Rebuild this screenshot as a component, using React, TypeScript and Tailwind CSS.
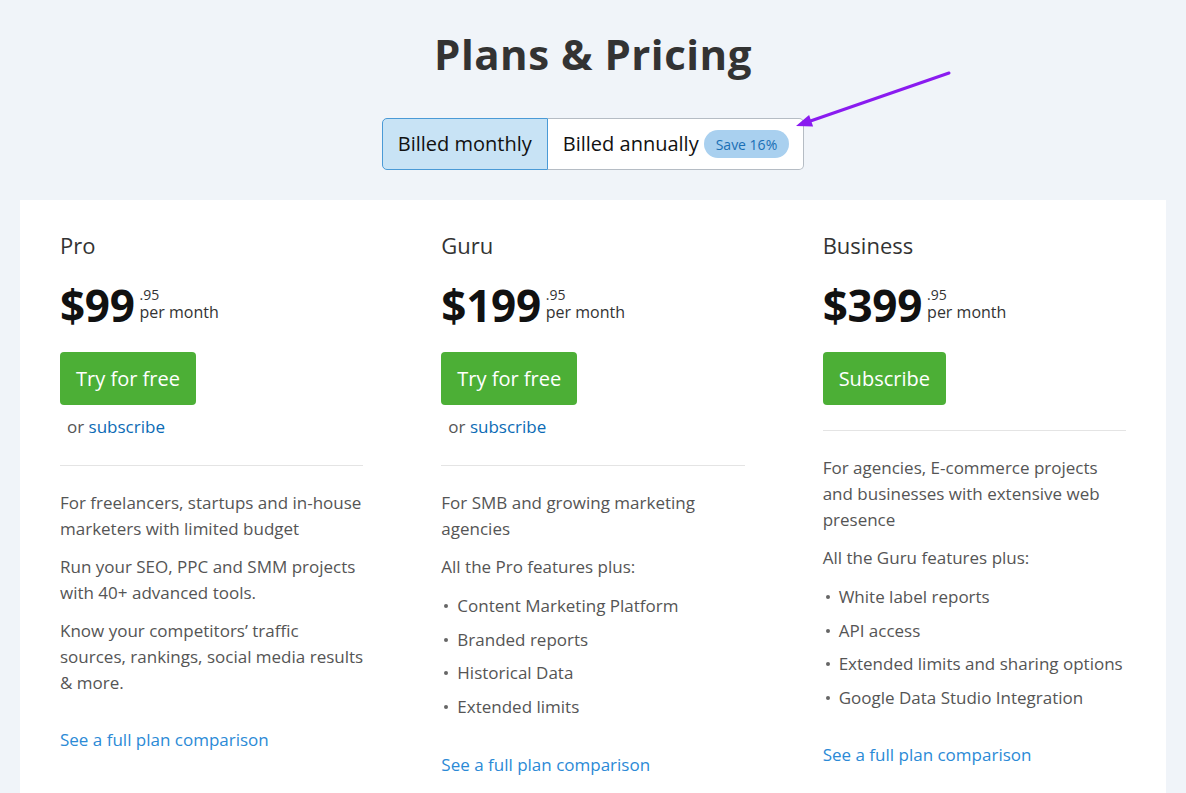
import React from "react";

const font = { fontFamily: '"Open Sans", "Noto Sans", sans-serif' };

function Price({ whole }: { whole: string }) {
  return (
    <div className="flex items-start mt-[21px]">
      <span className="text-[44px] leading-[48px] font-bold text-[#111] tracking-[-0.3px]">{whole}</span>
      <div className="flex flex-col ml-[5px] mt-[7px]">
        <span className="text-[14px] leading-[14px] text-[#333]">.95</span>
        <span className="mt-[1px] text-[16px] leading-[18px] text-[#333]">per month</span>
      </div>
    </div>
  );
}

function Plan({
  name,
  whole,
  button,
  orSubscribe,
  children,
}: {
  name: string;
  whole: string;
  button: string;
  orSubscribe: boolean;
  children: React.ReactNode;
}) {
  return (
    <div className="flex flex-col">
      <div className="text-[22px] leading-[30px] text-[#333] mt-[30px]">{name}</div>
      <Price whole={whole} />
      <div className="mt-[23px]">
        <button className="h-[53px] px-[16px] rounded-[4px] bg-[#4caf36] text-white text-[20px]">
          {button}
        </button>
      </div>
      {orSubscribe && (
        <div className="mt-[11px] ml-[7px] text-[17px] leading-[22px] text-[#555]">
          or <span className="text-[#0b6bb5]">subscribe</span>
        </div>
      )}
      <div className={`border-t border-[#e4e4e4] ${orSubscribe ? "mt-[27px]" : "mt-[25px]"}`} />
      <div className="mt-[24px] text-[17px] leading-[26px] text-[#555]">{children}</div>
    </div>
  );
}

function Bullets({ items }: { items: string[] }) {
  return (
    <ul className="mt-[13px] flex flex-col gap-[7.5px]">
      {items.map((t) => (
        <li key={t} className="flex items-center">
          <span className="w-[4px] h-[4px] rounded-full bg-[#666] ml-[3px] mr-[9px]" />
          <span>{t}</span>
        </li>
      ))}
    </ul>
  );
}

function SeeLink({ mt }: { mt: string }) {
  return <div className={`${mt} text-[17px] leading-[26px] text-[#2b8ad6]`}>See a full plan comparison</div>;
}

export default function App() {
  return (
    <div className="min-h-[793px] bg-[#f0f4f9] overflow-hidden" style={font}>
      <div className="flex flex-col items-center pt-[26px]">
        <h1 className="text-[42px] leading-[56px] font-bold text-[#333] tracking-[0.5px]">Plans &amp; Pricing</h1>
        <div className="relative mt-[36px] flex h-[52px]">
          <div className="flex items-center px-[15px] bg-[#c8e3f5] border border-[#4a9ad6] rounded-l-[5px] text-[20px] text-[#111]">
            Billed monthly
          </div>
          <div className="flex items-center pl-[15px] pr-[14px] bg-white border border-l-0 border-[#b5bcc4] rounded-r-[5px] text-[20px] text-[#111]">
            Billed annually
            <span className="ml-[5px] h-[28px] px-[12px] flex items-center rounded-full bg-[#a9d0ef] text-[#1a6fb5] text-[14px]">
              Save 16%
            </span>
          </div>
          <svg className="absolute left-[400px] top-[-50px]" width="175" height="70" viewBox="0 0 175 70">
            <line x1="167" y1="5" x2="27" y2="53.5" stroke="#8a1bf0" strokeWidth="3" strokeLinecap="round" />
            <polygon points="14,58 31.1,58.5 27.1,47.1" fill="#8a1bf0" />
          </svg>
        </div>
      </div>
      <div className="mx-[20px] mt-[30px] bg-white px-[40px] pb-[20px] grid grid-cols-3 gap-x-[78px]">
        <Plan name="Pro" whole="$99" button="Try for free" orSubscribe>
          <p>For freelancers, startups and in-house marketers with limited budget</p>
          <p className="mt-[12px]">Run your SEO, PPC and SMM projects with 40+ advanced tools.</p>
          <p className="mt-[12px]">Know your competitors’ traffic sources, rankings, social media results &amp; more.</p>
          <SeeLink mt="mt-[31px]" />
        </Plan>
        <Plan name="Guru" whole="$199" button="Try for free" orSubscribe>
          <p>For SMB and growing marketing agencies</p>
          <p className="mt-[12px]">All the Pro features plus:</p>
          <Bullets items={["Content Marketing Platform", "Branded reports", "Historical Data", "Extended limits"]} />
          <SeeLink mt="mt-[32px]" />
        </Plan>
        <Plan name="Business" whole="$399" button="Subscribe" orSubscribe={false}>
          <p>For agencies, E-commerce projects and businesses with extensive web presence</p>
          <p className="mt-[12px]">All the Guru features plus:</p>
          <Bullets items={["White label reports", "API access", "Extended limits and sharing options", "Google Data Studio Integration"]} />
          <SeeLink mt="mt-[31px]" />
        </Plan>
      </div>
    </div>
  );
}
